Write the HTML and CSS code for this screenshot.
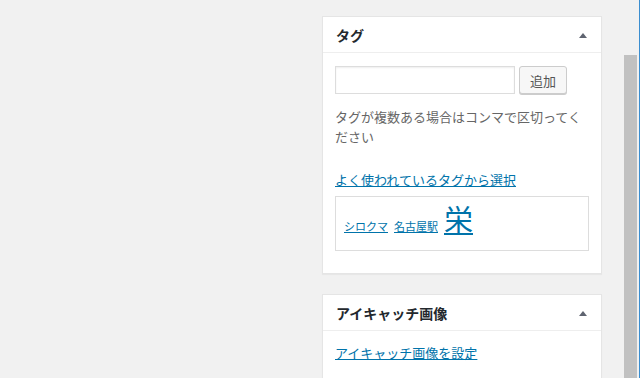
FILE: index.html
```html
<!DOCTYPE html>
<html lang="ja">
<head>
<meta charset="utf-8">
<link rel="stylesheet" href="styles.css">
</head>
<body>
<div class="sidebar">
  <div class="postbox">
    <div class="hndle"><span>タグ</span><span class="toggle"></span></div>
    <div class="inside">
      <div class="ajaxtag">
        <input class="newtag" type="text">
        <button class="button">追加</button>
      </div>
      <p class="howto">タグが複数ある場合はコンマで区切ってください</p>
      <p class="choose"><a href="#">よく使われているタグから選択</a></p>
      <div class="tagcloud">
        <a href="#" class="t-sm">シロクマ</a>
        <a href="#" class="t-sm">名古屋駅</a>
        <a href="#" class="t-lg">栄</a>
      </div>
    </div>
  </div>
  <div class="postbox">
    <div class="hndle"><span>アイキャッチ画像</span><span class="toggle"></span></div>
    <div class="inside inside-2">
      <p class="setlink"><a href="#">アイキャッチ画像を設定</a></p>
    </div>
  </div>
</div>
<div class="scrollbar"><div class="thumb"></div></div>
<div class="edge"></div>
</body>
</html>
```
FILE: styles.css
```css
html, body {
  margin: 0;
  padding: 0;
  height: 100%;
  overflow: hidden;
}
body {
  background: #f1f1f1;
  font-family: "Noto Sans CJK JP", "Noto Sans", sans-serif;
  font-size: 13px;
  color: #444;
}
.sidebar {
  width: 280px;
  margin-left: 322px;
  padding-top: 16px;
}
.postbox {
  background: #fff;
  border: 1px solid #e5e5e5;
  box-shadow: 0 1px 1px rgba(0,0,0,0.04);
  margin-bottom: 20px;
}
.hndle {
  display: flex;
  justify-content: space-between;
  align-items: center;
  height: 35px;
  padding: 0 14px 0 13px;
  border-bottom: 1px solid #eee;
  font-size: 14px;
  font-weight: 700;
  color: #23282d;
}
.toggle {
  width: 0;
  height: 0;
  border-left: 4px solid transparent;
  border-right: 4px solid transparent;
  border-bottom: 5px solid #5f6470;
  margin-top: 2px;
}
.inside {
  padding: 13px 12px 22px 12px;
}
.ajaxtag {
  display: flex;
  gap: 4px;
}
.newtag {
  box-sizing: border-box;
  width: 180px;
  height: 28px;
  border: 1px solid #ddd;
  box-shadow: inset 0 1px 2px rgba(0,0,0,0.07);
  margin: 0;
  padding: 0 6px;
}
.button {
  box-sizing: border-box;
  width: 48px;
  height: 28px;
  margin: 0;
  background: #f7f7f7;
  border: 1px solid #ccc;
  border-radius: 3px;
  box-shadow: 0 1px 0 #ccc;
  font-family: "Noto Sans CJK JP", sans-serif;
  font-size: 13px;
  color: #555;
  padding: 0;
}
.howto {
  margin: 13px 0 0 0;
  line-height: 20px;
  color: #666;
}
.choose {
  margin: 23px 0 0 0;
  line-height: 20px;
}
a {
  color: #0073aa;
  text-decoration: underline;
}
.tagcloud {
  margin-top: 6px;
  border: 1px solid #ddd;
  height: 53px;
  padding: 0 8px;
  display: flex;
  align-items: baseline;
  gap: 6px;
  line-height: 1;
}
.t-sm {
  font-size: 11px;
  padding-top: 24px;
}
.t-lg {
  font-size: 29px;
}
.inside-2 {
  padding-top: 12px;
}
.setlink {
  margin: 0;
  line-height: 20px;
}
.scrollbar {
  position: absolute;
  left: 624px;
  top: 55px;
  width: 13px;
  bottom: 0;
}
.thumb {
  background: #c1c1c1;
  height: 100%;
}
.edge {
  position: absolute;
  right: 0;
  top: 0;
  width: 1px;
  height: 100%;
  background: #3b8ed0;
}
```
